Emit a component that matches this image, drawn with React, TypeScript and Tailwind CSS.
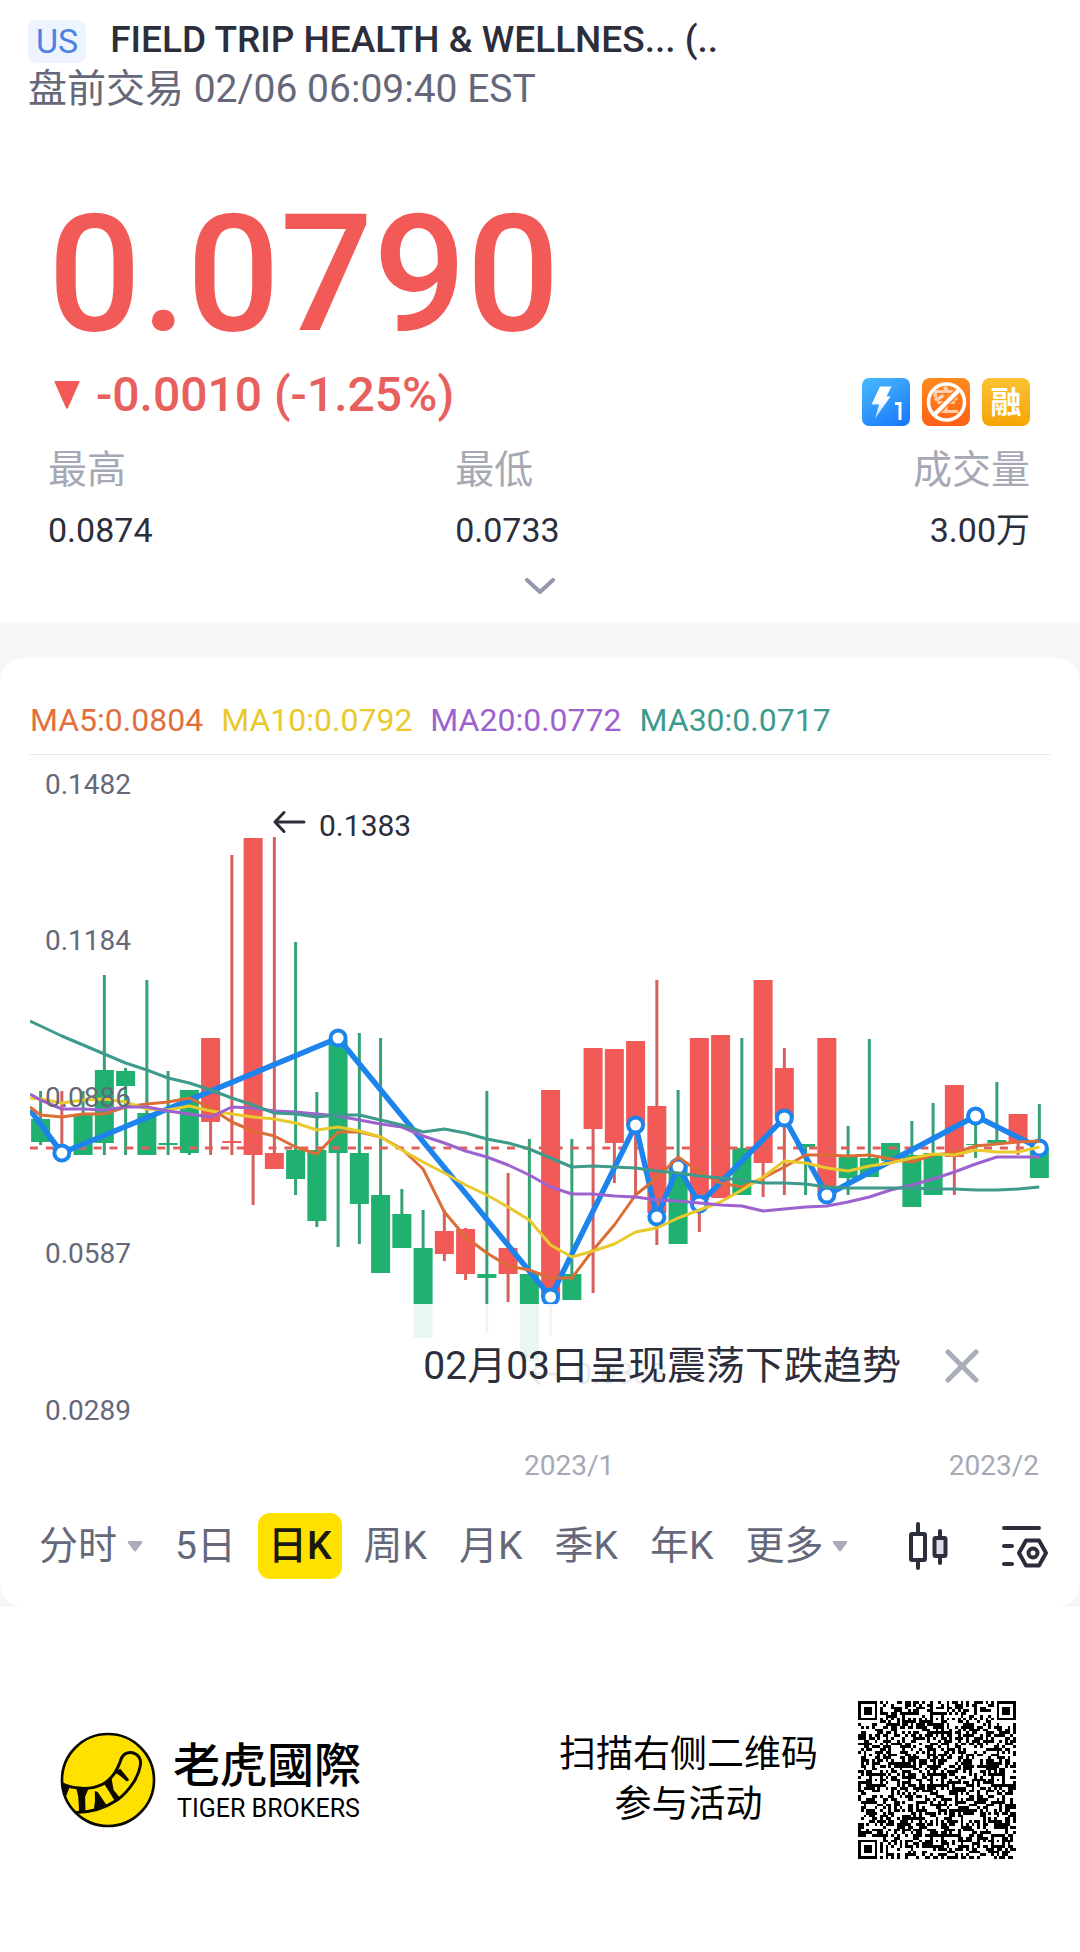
import React from 'react';

const UP = '#f25a58';
const DOWN = '#20b06f';
const UP_WICK = '#d6605e';
const DOWN_WICK = '#36a273';

type Candle = { c: 'r' | 'g'; hi: number; top: number; bot: number; lo: number };

const k = (c: 'r' | 'g', hi: number, top: number, bot: number, lo: number): Candle => ({ c, hi, top, bot, lo });

const CANDLES: Candle[] = [
  k('g', 1091, 1119, 1142, 1145),
  k('r', 1091, 1148, 1150, 1153),
  k('g', 1091, 1115, 1155, 1155),
  k('g', 975, 1070, 1143, 1155),
  k('g', 1068, 1071, 1086, 1155),
  k('g', 980, 1113, 1155, 1155),
  k('g', 1071, 1143, 1145, 1155),
  k('g', 1090, 1090, 1153, 1155),
  k('r', 1038, 1038, 1122, 1155),
  k('r', 855, 1141, 1143, 1155),
  k('r', 838, 838, 1155, 1205),
  k('r', 837, 1153, 1169, 1169),
  k('g', 942, 1150, 1179, 1195),
  k('g', 1092, 1150, 1221, 1227),
  k('g', 1040, 1040, 1153, 1247),
  k('g', 1033, 1153, 1204, 1244),
  k('g', 1038, 1195, 1273, 1273),
  k('g', 1189, 1214, 1248, 1248),
  k('g', 1210, 1248, 1338, 1338),
  k('r', 1210, 1231, 1254, 1261),
  k('r', 1228, 1229, 1274, 1280),
  k('g', 1091, 1274, 1278, 1333),
  k('r', 1173, 1248, 1274, 1302),
  k('g', 1139, 1274, 1361, 1361),
  k('r', 1090, 1090, 1297, 1336),
  k('g', 1139, 1274, 1300, 1300),
  k('r', 1048, 1048, 1129, 1293),
  k('r', 1049, 1049, 1143, 1183),
  k('r', 1041, 1041, 1125, 1198),
  k('r', 980, 1106, 1213, 1245),
  k('g', 1090, 1165, 1244, 1244),
  k('r', 1038, 1038, 1200, 1232),
  k('r', 1035, 1035, 1198, 1198),
  k('g', 1038, 1148, 1195, 1195),
  k('r', 980, 980, 1163, 1197),
  k('r', 1048, 1068, 1118, 1195),
  k('g', 1144, 1144, 1147, 1195),
  k('r', 1038, 1038, 1195, 1195),
  k('g', 1126, 1156, 1178, 1195),
  k('g', 1039, 1158, 1177, 1177),
  k('g', 1143, 1143, 1161, 1161),
  k('g', 1121, 1155, 1207, 1207),
  k('g', 1103, 1153, 1195, 1195),
  k('r', 1085, 1085, 1157, 1195),
  k('g', 1116, 1144, 1145, 1158),
  k('g', 1082, 1140, 1143, 1143),
  k('r', 1114, 1114, 1143, 1155),
  k('g', 1104, 1148, 1178, 1178),
];

const X0 = 40.6;
const STEP = 21.25;
const cx = (i: number) => X0 + STEP * i;

// Each series starts with its value at the plot's left edge.
const MA5 = [1107, 1115, 1117, 1114, 1114, 1107, 1104, 1102, 1098, 1108, 1122, 1131, 1136, 1147, 1154, 1132, 1132, 1137, 1149, 1169, 1212, 1237, 1253, 1266, 1270, 1278, 1278, 1250, 1225, 1195, 1178, 1157, 1172, 1183, 1187, 1178, 1167, 1155, 1155, 1156, 1155, 1159, 1162, 1155, 1153, 1146, 1144, 1142, 1141];
const MA10 = [1098, 1099, 1103, 1100, 1099, 1102, 1109, 1110, 1106, 1111, 1114, 1117, 1119, 1123, 1130, 1127, 1131, 1137, 1150, 1162, 1173, 1185, 1195, 1207, 1220, 1245, 1257, 1251, 1244, 1232, 1228, 1218, 1210, 1202, 1190, 1177, 1161, 1163, 1168, 1171, 1166, 1163, 1158, 1154, 1155, 1150, 1152, 1152, 1147];
const MA20 = [1094, 1100, 1109, 1109, 1110, 1107, 1107, 1111, 1114, 1117, 1107, 1108, 1111, 1112, 1114, 1116, 1120, 1124, 1127, 1136, 1143, 1151, 1157, 1165, 1175, 1187, 1194, 1194, 1196, 1197, 1200, 1201, 1203, 1205, 1206, 1211, 1209, 1207, 1206, 1202, 1197, 1190, 1185, 1179, 1172, 1164, 1157, 1157, 1157];
const MA30 = [1021, 1026, 1036, 1045, 1054, 1063, 1070, 1078, 1083, 1090, 1098, 1105, 1113, 1114, 1117, 1115, 1115, 1120, 1125, 1132, 1129, 1133, 1139, 1143, 1149, 1158, 1167, 1166, 1167, 1168, 1171, 1173, 1176, 1178, 1180, 1183, 1183, 1184, 1187, 1188, 1188, 1188, 1188, 1189, 1189, 1190, 1190, 1189, 1187];

const line = (v: number[]) => v.map((y, i) => `${i === 0 ? 30 : cx(i - 1)},${y}`).join(' ');

const TREND: [number, number][] = [
  [1, 1153], [14, 1038], [24, 1297], [28, 1125], [29, 1217], [30, 1167], [31, 1204], [35, 1118], [37, 1195], [44, 1116], [47, 1148],
];

function Chart() {
  return (
    <svg viewBox="30 755 1020 730" className="block w-full" role="img" aria-label="日K" fontFamily="Roboto, sans-serif">
      {CANDLES.map((d, i) => (
        <g key={i}>
          <rect x={cx(i) - 1.5} y={d.hi} width={3} height={d.lo - d.hi} fill={d.c === 'r' ? UP_WICK : DOWN_WICK} />
          <rect x={cx(i) - 9.5} y={d.top} width={19} height={d.bot - d.top} fill={d.c === 'r' ? UP : DOWN} />
        </g>
      ))}
      <line x1="30" x2="1046" y1="1148" y2="1148" stroke="#e0605d" strokeWidth="3" strokeDasharray="8 7.9" />
      <g fill="none" stroke="#1c84ec" strokeWidth="5.5">
        <polyline points={`30,1110 ${TREND.map(([i, y]) => `${cx(i)},${y}`).join(' ')}`} strokeLinejoin="round" />
        {TREND.map(([i, y]) => (
          <circle key={i} cx={cx(i)} cy={y} r="7.5" fill="#fff" strokeWidth="4" />
        ))}
      </g>
      <g fill="none" strokeWidth="3" strokeLinejoin="round">
        <polyline points={line(MA5)} stroke="#dd6d36" />
        <polyline points={line(MA10)} stroke="#e9c92c" />
        <polyline points={line(MA20)} stroke="#9d62cd" />
        <polyline points={line(MA30)} stroke="#3e9a8c" />
      </g>
      <g fill="none" stroke="#2c2e3b" strokeWidth="3" strokeLinecap="round" strokeLinejoin="round">
        <path d="M304 822H275M284 812.500L275 822L284 831.500" />
        <path d="M559 1374H530M539 1364.500L530 1374L539 1383.500" />
      </g>
      <g fill="#2c2e3b" fontSize="30">
        <text x="319" y="836">0.1383</text>
        <text x="575" y="1384">0.0333</text>
      </g>
      <rect x="30" y="1304" width="1020" height="122" fill="#fff" fillOpacity="0.9" />
      <g fill="#656879" fontSize="28">
        <text x="45" y="794">0.1482</text>
        <text x="45" y="950">0.1184</text>
        <text x="45" y="1107">0.0886</text>
        <text x="45" y="1263">0.0587</text>
        <text x="45" y="1420">0.0289</text>
      </g>
      <g fill="#a6a9b5" fontSize="28">
        <text x="524" y="1475">2023/1</text>
        <text x="1039" y="1475" textAnchor="end">2023/2</text>
      </g>
    </svg>
  );
}

const QR_SIZE = 57;

function qrPath() {
  const n = QR_SIZE;
  const ring = (x: number, y: number, ox: number, oy: number, r: number) => Math.max(Math.abs(x - ox), Math.abs(y - oy)) - r;
  let seed = 20230206;
  let d = '';
  for (let y = 0; y < n; y++) {
    for (let x = 0; x < n; x++) {
      seed = (seed * 1103515245 + 12345) % 2147483648;
      let on = seed / 2147483648 < 0.5;
      if (y === 6 || x === 6) on = (x + y) % 2 === 0;
      for (const [ax, ay] of [[28, 6], [6, 28], [28, 28], [50, 28], [28, 50], [50, 50]]) {
        if (ring(x, y, ax, ay, 2) <= 0) on = ring(x, y, ax, ay, 0) !== 1;
      }
      for (const [fx, fy] of [[3, 3], [n - 4, 3], [3, n - 4]]) {
        const r = ring(x, y, fx, fy, 0);
        if (r <= 4) on = r <= 1 || r === 3;
      }
      if (on) d += `M${x} ${y}h1v1h-1z`;
    }
  }
  return d;
}

const QR = qrPath();

function TigerLogo() {
  return (
    <svg viewBox="58 93 290 290" className="size-24 shrink-0" aria-hidden="true">
      <defs>
        <clipPath id="disc"><circle cx="203" cy="238" r="140" /></clipPath>
      </defs>
      <circle cx="203" cy="238" r="139" fill="#ffe100" stroke="#0a0a00" strokeWidth="8" />
      <g clipPath="url(#disc)" fill="#0a0a00">
        <path
          d="M60 248C100 266 150 270 188 250C214 236 230 210 240 182C246 160 258 154 272 155C292 157 304 172 301 192C296 228 270 268 232 298C196 322 152 336 108 336"
          fill="none" stroke="#0a0a00" strokeWidth="9" strokeLinecap="round"
        />
        <path d="M60 242L88 258L72 298L58 280Z" />
        <path d="M106 258L145 262L134 288L135 336H116L113 288Z" />
        <path d="M163 272Q172 270 176 280L199 314L160 328Q166 300 163 272Z" />
        <path d="M190 248L214 234L220 268L240 292L224 302L208 276Z" />
        <path d="M222 214L240 204L266 236Q266 244 258 241L240 226Z" />
      </g>
    </svg>
  );
}

function Caret() {
  return (
    <svg viewBox="0 0 16 11" className="w-4 shrink-0" aria-hidden="true">
      <path d="M1.500 0H14.500Q16 0.500 15 2L9 10Q8 11 7 10L1 2Q0 0.500 1.500 0Z" fill="#a9acb9" />
    </svg>
  );
}

const badge = 'flex size-12 items-center justify-center rounded-lg';

export default function App() {
  return (
    <main className="min-h-screen w-full bg-white font-['Roboto','Noto_Sans_CJK_SC',sans-serif] text-[#2c2e3b]">
      <header className="pt-4">
        <div className="flex items-start gap-6 px-7">
          <span className="mt-1 rounded-lg bg-[#eef4ff] px-2 text-[34px] leading-[43px] text-[#4c82e0]">US</span>
          <h1 className="min-w-0 text-[37px] leading-[48px] font-medium whitespace-nowrap">FIELD TRIP HEALTH &amp; WELLNES... (..</h1>
        </div>
        <p className="px-7 text-[39px] leading-[50px] text-[#656879]">盘前交易 02/06 06:09:40 EST</p>

        <section className="px-12 pt-19">
          <p className="text-[164px] leading-[168px] font-medium text-[#f25a58]">0.0790</p>
          <div className="flex items-end justify-between pt-1.5 pr-0.5">
            <p className="flex items-center gap-4 pl-1.5 text-[48px] leading-[62px] font-medium text-[#e8605d]">
              <svg viewBox="0 0 26 28" className="w-[26px]" aria-hidden="true">
                <path d="M1 0H25Q26 0 25.500 1L14 27Q13 28.500 12 27L0.500 1Q0 0 1 0Z" fill="#f25a58" />
              </svg>
              -0.0010 (-1.25%)
            </p>
            <div className="flex gap-3">
              <svg viewBox="0 0 48 48" className="size-12" role="img" aria-label="Level 1">
                <defs>
                  <linearGradient id="lv" x1="0.200" y1="0" x2="0.800" y2="1"><stop offset="0" stopColor="#45b5fb" /><stop offset="1" stopColor="#1a7bfb" /></linearGradient>
                  <linearGradient id="bolt" x1="0" y1="0" x2="0" y2="1"><stop offset="0.400" stopColor="#fff" /><stop offset="1" stopColor="#b5dcff" /></linearGradient>
                </defs>
                <rect width="48" height="48" rx="7" fill="url(#lv)" />
                <path d="M18 8.500H29.500L24.500 18.500H28.500L13 40.500L17 26.500H9.500Z" fill="url(#bolt)" />
                <path d="M33 25.500H38V42" fill="none" stroke="#fff" strokeWidth="3" />
              </svg>
              <div className={`${badge} relative bg-linear-to-b from-[#ff8a1e] to-[#ff5f17]`}>
                <span className="text-[28px] leading-none font-bold text-[#ffd0ae]">空</span>
                <svg viewBox="0 0 48 48" className="absolute inset-0 size-12" aria-hidden="true">
                  <path d="M12 37L37 12" stroke="#ff7a20" strokeWidth="7" />
                  <circle cx="24.500" cy="24" r="18" fill="none" stroke="#fff" strokeWidth="3.500" />
                  <path d="M12 37L37 12" stroke="#fff" strokeWidth="4" />
                </svg>
              </div>
              <div className={`${badge} bg-linear-to-b from-[#fbc231] to-[#f6a400]`}>
                <span className="text-[31px] leading-none font-bold text-white">融</span>
              </div>
            </div>
          </div>
          <dl className="grid grid-cols-[17fr_12fr_12fr] pt-5 pr-0.5 text-[34px] leading-[48px]">
            <div><dt className="text-[39px] text-[#a6a9b5]">最高</dt><dd className="pt-3">0.0874</dd></div>
            <div><dt className="text-[39px] text-[#a6a9b5]">最低</dt><dd className="pt-3">0.0733</dd></div>
            <div className="text-right"><dt className="text-[39px] text-[#a6a9b5]">成交量</dt><dd className="pt-3">3.00万</dd></div>
          </dl>
        </section>
        <button type="button" aria-label="展开" className="mx-auto mt-6 mb-7 block">
          <svg viewBox="0 0 30 16" className="w-[30px]" aria-hidden="true">
            <path d="M2 2L15 14L28 2" fill="none" stroke="#9297ad" strokeWidth="4" strokeLinecap="round" strokeLinejoin="round" />
          </svg>
        </button>
      </header>

      <div className="bg-[#f7f7f7] pt-9">
        <section className="rounded-3xl bg-white px-[30px] pt-10 pb-7">
          <div className="flex gap-[18px] border-b border-[#e8e8ea] pb-3 text-[32px] leading-[44px] whitespace-nowrap">
            <span className="text-[#e0703c]">MA5:0.0804</span>
            <span className="text-[#e9c92c]">MA10:0.0792</span>
            <span className="text-[#9d62cd]">MA20:0.0772</span>
            <span className="text-[#3e9a8c]">MA30:0.0717</span>
          </div>
          <div className="relative">
            <Chart />
            <div className="absolute right-[71px] bottom-[94px] flex items-center gap-11">
              <p className="text-[39px] leading-[50px]">02月03日呈现震荡下跌趋势</p>
              <button type="button" aria-label="关闭">
                <svg viewBox="0 0 34 34" className="w-[34px]" aria-hidden="true">
                  <path d="M3 3L31 31M31 3L3 31" stroke="#a9adb9" strokeWidth="5" strokeLinecap="round" />
                </svg>
              </button>
            </div>
          </div>
          <nav className="mt-7 flex items-center gap-8 pl-[9px] text-[39px] leading-[66px] whitespace-nowrap text-[#656879]">
            <button type="button" className="flex items-center gap-2.5">分时<Caret /></button>
            <button type="button">5日</button>
            <button type="button" aria-pressed="true" className="-mx-2.5 rounded-xl bg-[#ffe100] px-2.5 font-medium text-[#191a10]">日K</button>
            <button type="button">周K</button>
            <button type="button">月K</button>
            <button type="button">季K</button>
            <button type="button">年K</button>
            <button type="button" className="flex items-center gap-2">更多<Caret /></button>
            <span className="ml-auto flex items-center gap-[52px] pr-0.5">
              <button type="button" aria-label="K线样式">
                <svg viewBox="0 0 40 48" className="w-10" fill="none" stroke="#2c2e3b" strokeWidth="4" strokeLinecap="round" strokeLinejoin="round" aria-hidden="true">
                  <rect x="3" y="12" width="14" height="26" rx="1" />
                  <path d="M10 2V12M10 38V46M32 9V16M32 34V41" />
                  <rect x="26.500" y="16" width="11" height="18" rx="1" fill="#dcdde6" />
                </svg>
              </button>
              <button type="button" aria-label="指标设置">
                <svg viewBox="0 0 48 48" className="w-12" fill="none" stroke="#2c2e3b" strokeWidth="4" strokeLinecap="round" strokeLinejoin="round" aria-hidden="true">
                  <path d="M4 6H39M4 24H12M4 42H12M26 18.500H39L46 31L39 43.500H26L19 31Z" />
                  <circle cx="33" cy="31" r="4.500" />
                </svg>
              </button>
            </span>
          </nav>
        </section>
      </div>

      <footer className="flex items-center justify-between pt-[94px] pr-16 pb-[88px] pl-[60px] text-black">
        <div className="flex items-center gap-[17px]">
          <TigerLogo />
          <div>
            <p className="text-[47px] leading-[58px] font-medium" lang="zh-Hant">老虎國際</p>
            <p className="pl-1 text-[25px] leading-[28px]">TIGER BROKERS</p>
          </div>
        </div>
        <div className="flex items-center gap-10">
          <p className="text-center text-[37px] leading-[50px]">扫描右侧二维码<br />参与活动</p>
          <svg viewBox={`0 0 ${QR_SIZE} ${QR_SIZE}`} className="w-[158px]" shapeRendering="crispEdges" role="img" aria-label="二维码">
            <path d={QR} fill="#000" />
          </svg>
        </div>
      </footer>
    </main>
  );
}
